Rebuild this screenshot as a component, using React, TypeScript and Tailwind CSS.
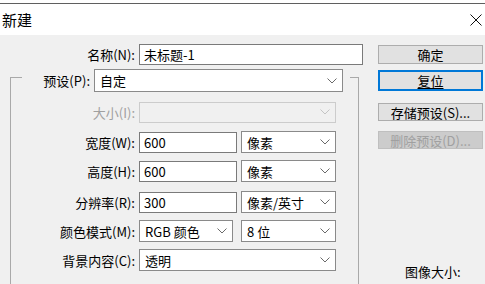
import React from "react";

function Chevron({ disabled }: { disabled?: boolean }) {
  return (
    <svg width="10" height="6" viewBox="0 0 10 6" className="shrink-0">
      <path
        d="M0.5 0.5 L5 5 L9.5 0.5"
        fill="none"
        stroke={disabled ? "#c4c4c4" : "#6a6a6a"}
        strokeWidth="1"
      />
    </svg>
  );
}

function Select({
  value,
  className,
  disabled,
}: {
  value?: string;
  className: string;
  disabled?: boolean;
}) {
  return (
    <div
      className={
        "flex items-center justify-between pl-[5px] pr-[5px] border box-border " +
        (disabled ? "bg-[#f0f0f0] border-[#cccccc] " : "bg-white border-[#8a8a8a] ") +
        className
      }
    >
      <span className="leading-none whitespace-nowrap">{value}</span>
      <Chevron disabled={disabled} />
    </div>
  );
}

function Input({ value, className }: { value: string; className: string }) {
  return (
    <div className={"flex items-center pl-[4px] border border-[#7a7a7a] bg-white box-border " + className}>
      <span className="leading-none whitespace-nowrap">{value}</span>
    </div>
  );
}

function Label({ text, disabled }: { text: string; disabled?: boolean }) {
  return (
    <div className={"w-[124px] text-right leading-none whitespace-nowrap " + (disabled ? "text-[#a0a0a0]" : "")}>
      {text}
    </div>
  );
}

function Button({
  text,
  variant,
  className,
}: {
  text: string;
  variant?: "default" | "focus" | "disabled";
  className?: string;
}) {
  const v =
    variant === "focus"
      ? "border-2 border-[#0078d7] bg-[#e1e1e1]"
      : variant === "disabled"
      ? "border border-[#bfbfbf] bg-[#cccccc] text-[#a0a0a0]"
      : "border border-[#adadad] bg-[#e1e1e1]";
  return (
    <div className={"w-[105px] flex items-center justify-center box-border " + v + " " + (className || "")}>
      <span className={"leading-none " + (variant === "focus" ? "underline underline-offset-2" : "")}>{text}</span>
    </div>
  );
}

export default function App() {
  return (
    <div className="w-[485px] h-[284px] overflow-hidden bg-[#f0f0f0] text-[13px] text-black font-['Noto_Sans_CJK_SC',sans-serif]">
      <div className="bg-white pt-[3px]">
        <div className="border-t border-[#5f5f5f] h-[32px] flex items-center justify-between pl-[2px] pr-[2px]">
          <span className="text-[15px] leading-none">新建</span>
          <svg width="12" height="12" viewBox="0 0 12 12" className="mr-[1px]">
            <path d="M0.5 0.5 L11.5 11.5 M11.5 0.5 L0.5 11.5" stroke="#111" strokeWidth="1" fill="none" />
          </svg>
        </div>
      </div>
      <div className="flex">
        <div className="w-[378px] flex flex-col">
          <div className="mt-[9px] h-[20px] flex items-center">
            <div className="w-[135px] text-right leading-none whitespace-nowrap">名称(N):</div>
            <Input value="未标题-1" className="ml-[4px] w-[224px] h-[21px]" />
          </div>
          <div className="mt-[13px] ml-[10px] w-[349px] h-[220px] border-l border-r border-t border-[#a9a9a9] box-border">
            <div className="-mt-[9px] ml-[11px] w-[328px] h-[23px] bg-[#f0f0f0] flex items-center">
              <div className="w-[68px] text-right leading-none whitespace-nowrap">预设(P):</div>
              <Select value="自定" className="ml-[4px] w-[249px] h-[23px]" />
            </div>
            <div className="flex flex-col">
              <div className="mt-[9px] h-[22px] flex items-center">
                <Label text="大小(I):" disabled />
                <Select disabled className="ml-[4px] w-[197px] h-[21px]" />
              </div>
              <div className="mt-[8px] h-[22px] flex items-center">
                <Label text="宽度(W):" />
                <Input value="600" className="ml-[4px] w-[98px] h-[21px]" />
                <Select value="像素" className="ml-[4px] w-[95px] h-[22px]" />
              </div>
              <div className="mt-[7px] h-[22px] flex items-center">
                <Label text="高度(H):" />
                <Input value="600" className="ml-[4px] w-[98px] h-[21px]" />
                <Select value="像素" className="ml-[4px] w-[95px] h-[22px]" />
              </div>
              <div className="mt-[9px] h-[22px] flex items-center">
                <Label text="分辨率(R):" />
                <Input value="300" className="ml-[4px] w-[98px] h-[21px]" />
                <Select value="像素/英寸" className="ml-[4px] w-[95px] h-[22px]" />
              </div>
              <div className="mt-[7px] h-[22px] flex items-center">
                <Label text="颜色模式(M):" />
                <Select value="RGB 颜色" className="ml-[4px] w-[94px] h-[22px]" />
                <Select value="8 位" className="ml-[8px] w-[95px] h-[22px]" />
              </div>
              <div className="mt-[7px] h-[22px] flex items-center">
                <Label text="背景内容(C):" />
                <Select value="透明" className="ml-[4px] w-[197px] h-[22px]" />
              </div>
            </div>
          </div>
        </div>
        <div className="w-[105px] flex flex-col">
          <Button text="确定" className="mt-[10px] h-[19px]" />
          <Button text="复位" variant="focus" className="mt-[6px] h-[21px]" />
          <Button text="存储预设(S)..." className="mt-[12px] h-[18px]" />
          <Button text="删除预设(D)..." variant="disabled" className="mt-[10px] h-[18px]" />
          <div className="mt-[116px] ml-[27px] leading-none whitespace-nowrap">图像大小:</div>
        </div>
      </div>
    </div>
  );
}
